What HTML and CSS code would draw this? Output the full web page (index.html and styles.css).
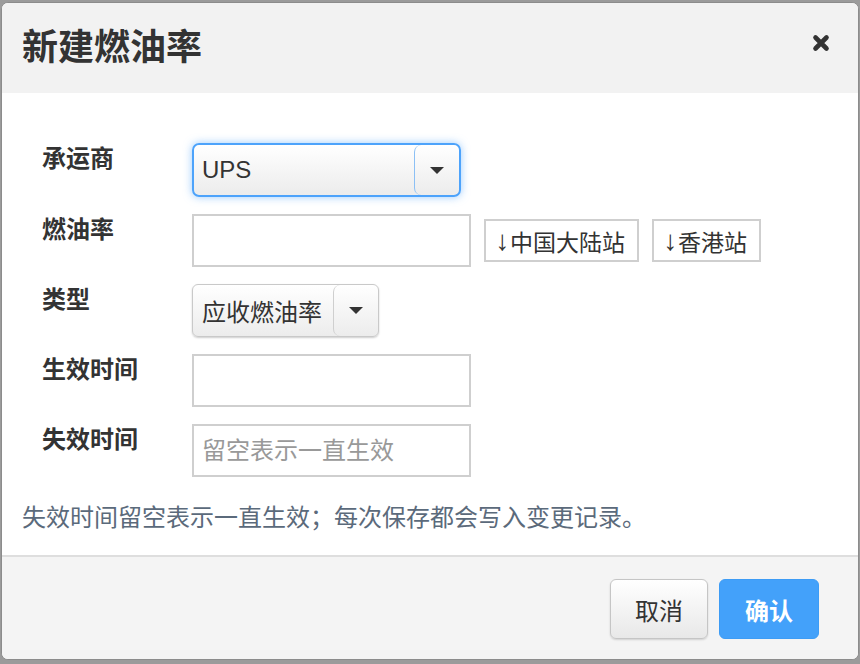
FILE: index.html
```html
<!DOCTYPE html>
<html lang="zh-CN">
<head>
<meta charset="utf-8">
<title>新建燃油率</title>
<link rel="stylesheet" href="styles.css">
</head>
<body>
<div class="modal">
  <div class="modal-header">
    <h3 class="modal-title">新建燃油率</h3>
    <button class="close" type="button" aria-label="关闭"><svg width="18" height="18" viewBox="0 0 18 18"><path d="M3.5 3.5L14.5 14.5M14.5 3.5L3.5 14.5" stroke="#333" stroke-width="4.6" stroke-linecap="round"/></svg></button>
  </div>
  <div class="modal-body">
    <div class="form">
      <label class="label">承运商</label>
      <div class="field">
        <div class="select select-focus"><span class="select-text">UPS</span><span class="caret-box"><span class="caret"></span></span></div>
      </div>
      <label class="label">燃油率</label>
      <div class="field">
        <input class="input" type="text">
        <button class="station" type="button"><span class="arrow">↓</span>中国大陆站</button>
        <button class="station" type="button"><span class="arrow">↓</span>香港站</button>
      </div>
      <label class="label">类型</label>
      <div class="field">
        <div class="select select-plain"><span class="select-text">应收燃油率</span><span class="caret-box"><span class="caret"></span></span></div>
      </div>
      <label class="label">生效时间</label>
      <div class="field"><input class="input" type="text"></div>
      <label class="label">失效时间</label>
      <div class="field"><input class="input" type="text" placeholder="留空表示一直生效"></div>
    </div>
    <p class="help">失效时间留空表示一直生效；每次保存都会写入变更记录。</p>
  </div>
  <div class="modal-footer">
    <button class="btn btn-default" type="button">取消</button>
    <button class="btn btn-primary" type="button">确认</button>
  </div>
</div>
</body>
</html>
```
FILE: styles.css
```css
html, body {
  margin: 0;
  padding: 0;
}
body {
  background: #9b9b9b;
  font-family: "Liberation Sans", "Noto Sans CJK SC", sans-serif;
  color: #333;
  height: 664px;
  overflow: hidden;
}
.modal {
  margin: 2px 1px 0 1px;
  height: 658px;
  box-sizing: border-box;
  border: 1px solid #8c8c8c;
  border-radius: 7px;
  background: #fff;
  overflow: hidden;
  display: flex;
  flex-direction: column;
}
.modal-header {
  height: 90px;
  flex: none;
  background: #f2f2f2;
  display: flex;
  align-items: center;
  justify-content: space-between;
  padding: 0 28px 0 20px;
}
.modal-title {
  margin: 0;
  font-size: 36px;
  line-height: 44px;
  font-weight: bold;
  color: #333;
}
.close {
  border: 0;
  background: none;
  padding: 0;
  width: 18px;
  height: 18px;
  display: flex;
  margin-top: -10px;
  cursor: pointer;
}
.modal-body {
  height: 462px;
  flex: none;
  box-sizing: border-box;
  padding: 50px 20px 0;
}
.form {
  display: grid;
  grid-template-columns: 150px 1fr;
  row-gap: 17px;
  margin-left: 20px;
}
.label {
  font-size: 24px;
  font-weight: bold;
  line-height: 32px;
  padding-top: 0;
}
.field {
  display: flex;
  align-items: center;
  gap: 13px;
}
.select {
  box-sizing: border-box;
  display: flex;
  align-items: center;
  background: linear-gradient(#ffffff, #ececec);
  font-size: 24px;
  color: #333;
}
.select-focus {
  width: 269px;
  height: 54px;
  border: 2px solid #4da3fb;
  border-radius: 7px;
  box-shadow: 0 0 9px rgba(75, 160, 250, 0.55);
}
.select-plain {
  width: 187px;
  height: 53px;
  border: 1px solid #c9c9c9;
  border-radius: 6px;
  box-shadow: 0 1px 2px rgba(0, 0, 0, 0.2);
}
.select-text {
  flex: 1;
  padding-left: 8px;
}
.select-plain .select-text {
  padding-left: 9px;
}
.caret-box {
  width: 44px;
  flex: none;
  align-self: stretch;
  display: flex;
  align-items: center;
  justify-content: center;
  border-left: 1px solid #cfcfcf;
  border-radius: 7px;
}
.select-focus .caret-box {
  border-left-color: #8cc0f5;
}
.caret {
  width: 0;
  height: 0;
  border-left: 7px solid transparent;
  border-right: 7px solid transparent;
  border-top: 7px solid #333;
}
.input {
  width: 279px;
  height: 53px;
  box-sizing: border-box;
  border: 2px solid #cfcfcf;
  border-radius: 0;
  padding: 0 8px;
  font-family: inherit;
  font-size: 24px;
  color: #333;
  background: #fff;
  outline: none;
}
.input::placeholder {
  color: #999;
}
.station {
  height: 43px;
  box-sizing: border-box;
  border: 2px solid #cfcfcf;
  background: #fff;
  padding: 0 12px 0 9px;
  font-family: inherit;
  font-size: 23px;
  color: #333;
  display: flex;
  align-items: center;
}
.arrow {
  display: inline-block;
  width: 15px;
  font-size: 28px;
  line-height: 1;
  color: #333;
}
.help {
  margin: 25px 0 0;
  font-size: 24px;
  line-height: 32px;
  color: #5b6a7b;
}
.modal-footer {
  flex: 1;
  background: #f4f4f4;
  border-top: 2px solid #dedede;
  display: flex;
  justify-content: flex-end;
  align-items: flex-start;
  gap: 11px;
  padding: 22px 39px 0;
}
.btn {
  height: 60px;
  border-radius: 6px;
  font-family: inherit;
  font-size: 24px;
  cursor: pointer;
}
.btn-default {
  width: 98px;
  border: 1px solid #c5c5c5;
  background: linear-gradient(#ffffff, #e8e8e8);
  box-shadow: 0 1px 2px rgba(0, 0, 0, 0.15);
  color: #333;
}
.btn-primary {
  width: 100px;
  border: 1px solid #3d9cf5;
  background: #43a1fa;
  color: #fff;
  font-weight: bold;
}
```
